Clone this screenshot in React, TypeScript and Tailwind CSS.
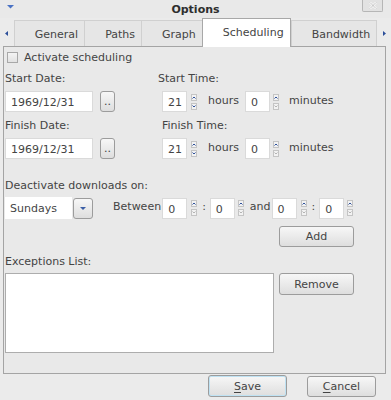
import React from 'react';

// small up/down arrow pair beside each spin field
function SpinArrows({ downDisabled = false }: { downDisabled?: boolean }) {
  return (
    <div className="flex flex-col gap-[2px] w-[6px]">
      <div className="h-[7px] w-[6px] border border-[#c4c4c4] bg-[#f2f2f2] flex items-center justify-center">
        <svg width="4" height="3" viewBox="0 0 4 3">
          <path d="M0.5 2.5 L2 1 L3.5 2.5" stroke="#2c4f9a" strokeWidth="1" fill="none" />
        </svg>
      </div>
      <div className="h-[7px] w-[6px] border border-[#c4c4c4] bg-[#f2f2f2] flex items-center justify-center">
        <svg width="4" height="3" viewBox="0 0 4 3">
          <path
            d="M0.5 0.5 L2 2 L3.5 0.5"
            stroke={downDisabled ? '#b4b4b4' : '#2c4f9a'}
            strokeWidth="1"
            fill="none"
          />
        </svg>
      </div>
    </div>
  );
}

function SpinBox({ value, downDisabled = false, gap = 'gap-[4px]' }: { value: string; downDisabled?: boolean; gap?: string }) {
  return (
    <div className={`flex items-center ${gap}`}>
      <div className="w-[25px] h-[21px] bg-white border border-[#dadada] flex items-center pl-[5px] pt-[2px]">
        {value}
      </div>
      <SpinArrows downDisabled={downDisabled} />
    </div>
  );
}

function Button({ children, className = '' }: { children: React.ReactNode; className?: string }) {
  return (
    <div
      className={`h-[21px] flex items-center justify-center rounded-[3px] border border-[#9c9c9c] bg-gradient-to-b from-[#f7f7f7] to-[#dedede] ${className}`}
    >
      {children}
    </div>
  );
}

const tabs = ['General', 'Paths', 'Graph', 'Scheduling', 'Bandwidth'];

export default function App() {
  return (
    <div
      className="w-[391px] h-[400px] flex flex-col bg-[#ebebeb] text-[11px] leading-none text-[#444444] overflow-hidden"
      style={{ fontFamily: '"DejaVu Sans", sans-serif' }}
    >
      {/* title bar */}
      <div className="relative h-[18px] flex items-center justify-center bg-[#e9e9e9]">
        <svg className="absolute left-[7px] top-[5px]" width="7" height="4" viewBox="0 0 7 4">
          <path d="M0 0 L7 0 L3.5 3.5 Z" fill="#4a72c4" />
        </svg>
        <span className="font-bold text-[#2e2e2e]">Options</span>
        <div className="absolute right-[8px] top-0 w-[21px] h-[12px] border border-t-0 border-[#b6b6b6] rounded-b-[2px] bg-[#e2e2e2] flex items-center justify-center">
          <svg width="8" height="7" viewBox="0 0 8 7">
            <path d="M1 0.5 L7 6.5 M7 0.5 L1 6.5" stroke="#ffffff" strokeWidth="2" />
            <path d="M1 0.5 L7 6.5 M7 0.5 L1 6.5" stroke="#b0b0b0" strokeWidth="0.8" />
          </svg>
        </div>
      </div>

      {/* tab strip */}
      <div className="h-[28px] flex items-end relative">
        <div className="w-[14px] h-[26px] flex items-center justify-center">
          <svg width="3" height="5" viewBox="0 0 3 5">
            <path d="M3 0 L0 2.5 L3 5 Z" fill="#2c4f9a" />
          </svg>
        </div>
        {tabs.map((t) =>
          t === 'Scheduling' ? (
            <div
              key={t}
              className="h-[29px] -mb-[1px] relative z-10 bg-white border border-b-0 border-[#a8a8a8] pl-[20px] pr-[6px] flex items-center"
            >
              <span className="-mt-[2px]">{t}</span>
            </div>
          ) : (
            <div
              key={t}
              className="h-[26px] bg-[#e6e6e6] border-t border-l border-[#d0d0d0] pl-[20px] pr-[6px] flex items-center"
            >
              <span className="mt-[2px]">{t}</span>
            </div>
          )
        )}
        <div className="w-[15px] h-[26px] flex items-center justify-center border-l border-[#d0d0d0]">
          <svg width="3" height="5" viewBox="0 0 3 5">
            <path d="M0 0 L3 2.5 L0 5 Z" fill="#2c4f9a" />
          </svg>
        </div>
      </div>

      {/* page */}
      <div className="ml-[3px] w-[383px] h-[328px] border border-[#a4a4a4] bg-[#e9e9e9] flex flex-col">
        <div className="mt-[4px] h-[12px] flex items-center pl-[3px] gap-[6px]">
          <div className="w-[11px] h-[11px] border border-[#a8a8a8] bg-gradient-to-b from-[#f4f4f4] to-[#e2e2e2]" />
          <span>Activate scheduling</span>
        </div>

        <div className="flex">
          {/* dates */}
          <div className="w-[154px] flex flex-col">
            <div className="mt-[8px] h-[14px] flex items-center pl-[1px]">Start Date:</div>
            <div className="mt-[6px] h-[21px] flex items-center pl-[1px] gap-[7px]">
              <div className="w-[88px] h-[21px] bg-white border border-[#dadada] flex items-center pl-[5px] pt-[1px]">
                1969/12/31
              </div>
              <Button className="w-[15px] items-end pb-[4px]">..</Button>
            </div>
            <div className="mt-[6px] h-[14px] flex items-center pl-[1px]">Finish Date:</div>
            <div className="mt-[6px] h-[21px] flex items-center pl-[1px] gap-[7px]">
              <div className="w-[88px] h-[21px] bg-white border border-[#dadada] flex items-center pl-[5px] pt-[1px]">
                1969/12/31
              </div>
              <Button className="w-[15px] items-end pb-[4px]">..</Button>
            </div>
          </div>

          {/* times */}
          <div className="flex flex-col">
            <div className="mt-[8px] h-[14px] flex items-center">Start Time:</div>
            <div className="mt-[6px] h-[21px] flex items-center pl-[4px]">
              <SpinBox value="21" />
              <span className="ml-[11px] -mt-[3px]">hours</span>
              <div className="ml-[6px]">
                <SpinBox value="0" downDisabled gap="gap-[3px]" />
              </div>
              <span className="ml-[10px] -mt-[3px]">minutes</span>
            </div>
            <div className="mt-[6px] h-[14px] flex items-center pl-[4px]">Finish Time:</div>
            <div className="mt-[6px] h-[21px] flex items-center pl-[4px]">
              <SpinBox value="21" />
              <span className="ml-[11px] -mt-[3px]">hours</span>
              <div className="ml-[6px]">
                <SpinBox value="0" downDisabled gap="gap-[3px]" />
              </div>
              <span className="ml-[10px] -mt-[3px]">minutes</span>
            </div>
          </div>
        </div>

        <div className="mt-[19px] h-[14px] flex items-center pl-[1px]">Deactivate downloads on:</div>
        <div className="mt-[5px] h-[22px] flex items-center pl-[1px]">
          <div className="w-[67px] h-[22px] bg-white flex items-center pl-[5px] pt-[1px]">Sundays</div>
          <Button className="ml-[1px] w-[20px] h-[21px]">
            <svg width="6" height="3" viewBox="0 0 6 3">
              <path d="M0 0 L6 0 L3 3 Z" fill="#3b5ea6" />
            </svg>
          </Button>
          <span className="ml-[20px] -mt-[4px]">Between</span>
          <div className="ml-[1px]">
            <SpinBox value="0" downDisabled />
          </div>
          <span className="ml-[5px] -mt-[4px]">:</span>
          <div className="ml-[4px]">
            <SpinBox value="0" downDisabled gap="gap-[3px]" />
          </div>
          <span className="ml-[6px] -mt-[4px]">and</span>
          <div className="ml-[1px]">
            <SpinBox value="0" downDisabled />
          </div>
          <span className="ml-[5px] -mt-[4px]">:</span>
          <div className="ml-[4px]">
            <SpinBox value="0" downDisabled gap="gap-[3px]" />
          </div>
        </div>

        <div className="mt-[7px] flex pl-[275px]">
          <Button className="w-[75px]">Add</Button>
        </div>

        <div className="mt-[7px] h-[14px] flex items-center pl-[1px]">Exceptions List:</div>
        <div className="mt-[5px] flex items-start pl-[1px]">
          <div className="w-[269px] h-[80px] bg-white border border-[#adadad]" />
          <Button className="ml-[5px] w-[75px] h-[22px]">Remove</Button>
        </div>
      </div>

      {/* footer */}
      <div className="mt-[1px] flex justify-end pr-[15px] gap-[20px]">
        <Button className="w-[79px] h-[22px] border-[#5cb3de] ring-1 ring-inset ring-[#bfe2f3]">
          <span>
            <span className="underline underline-offset-2">S</span>ave
          </span>
        </Button>
        <Button className="w-[69px] h-[21px] mt-[1px]">
          <span>
            <span className="underline underline-offset-2">C</span>ancel
          </span>
        </Button>
      </div>
    </div>
  );
}
